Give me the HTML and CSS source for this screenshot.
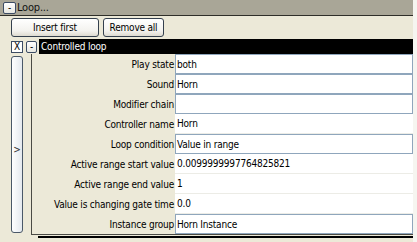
FILE: index.html
```html
<!DOCTYPE html>
<html>
<head>
<meta charset="utf-8">
<link rel="stylesheet" href="styles.css">
</head>
<body>
<div class="app">
  <div class="header">
    <span class="mini">-</span>
    <span class="header-title">Loop...</span>
  </div>
  <div class="toolbar">
    <button class="btn btn-insert">Insert first</button>
    <button class="btn btn-remove">Remove all</button>
  </div>
  <div class="item">
    <div class="item-head">
      <span class="chk">X</span>
      <span class="mini mini-item">-</span>
      <div class="item-title">Controlled loop</div>
    </div>
    <div class="item-body">
      <div class="side-btn">&gt;</div>
      <div class="props">
        <div class="row"><div class="label">Play state</div><div class="value box">both</div></div>
        <div class="row"><div class="label">Sound</div><div class="value box">Horn</div></div>
        <div class="row"><div class="label">Modifier chain</div><div class="value box"></div></div>
        <div class="row"><div class="label">Controller name</div><div class="value plain">Horn</div></div>
        <div class="row"><div class="label">Loop condition</div><div class="value box">Value in range</div></div>
        <div class="row"><div class="label">Active range start value</div><div class="value plain">0.0099999997764825821</div></div>
        <div class="row"><div class="label">Active range end value</div><div class="value plain">1</div></div>
        <div class="row"><div class="label">Value is changing gate time</div><div class="value plain">0.0</div></div>
        <div class="row"><div class="label">Instance group</div><div class="value box">Horn Instance</div></div>
      </div>
    </div>
    <div class="next-bar"></div>
  </div>
</div>
</body>
</html>
```

FILE: styles.css
```css
html, body {
  margin: 0;
  padding: 0;
}
body {
  background: #f6f5f0;
  font-family: "DejaVu Sans Condensed", "DejaVu Sans", sans-serif;
  font-stretch: condensed;
  font-size: 10px;
  letter-spacing: -0.2px;
  color: #000;
}
.app {
  width: 413px;
  height: 242px;
  background: #ece9d8;
  overflow: hidden;
}
.header {
  height: 16px;
  background: #a9a697;
  border-bottom: 1px solid #2e2e28;
  display: flex;
  align-items: center;
  padding-left: 3px;
  box-sizing: border-box;
}
.mini {
  width: 13px;
  height: 12px;
  box-sizing: border-box;
  border: 1px solid #3c4c64;
  border-radius: 2px;
  background: linear-gradient(#ffffff, #e6e6e0);
  display: flex;
  align-items: center;
  justify-content: center;
  font-size: 10px;
  line-height: 1;
  letter-spacing: 0;
}
.header-title {
  margin-left: 1px;
  font-size: 11px;
  color: #111;
}
.toolbar {
  display: flex;
  gap: 4px;
  padding: 2px 0 0 11px;
  height: 23px;
  box-sizing: border-box;
}
.btn {
  height: 19px;
  box-sizing: border-box;
  border: 1px solid #34404e;
  border-radius: 3px;
  background: linear-gradient(#ffffff, #f3f2ee 70%, #dedbd0);
  font-family: inherit;
  font-stretch: condensed;
  font-size: 10px;
  letter-spacing: -0.2px;
  padding: 0;
  color: #000;
}
.btn-insert { width: 88px; }
.btn-remove { width: 61px; }
.item-head {
  display: flex;
  align-items: center;
  height: 15px;
  padding-left: 11px;
}
.chk {
  width: 12px;
  height: 12px;
  box-sizing: border-box;
  border: 1px solid #3c4c64;
  background: #fff;
  display: flex;
  align-items: center;
  justify-content: center;
  font-size: 10px;
  letter-spacing: 0;
  line-height: 1;
}
.mini-item {
  margin-left: 3px;
  width: 11px;
}
.item-title {
  flex: 1;
  margin-left: 2px;
  height: 15px;
  background: #000;
  color: #fff;
  display: flex;
  align-items: center;
  padding-left: 2px;
}
.item-body {
  display: flex;
  padding-left: 11px;
}
.side-btn {
  width: 12px;
  height: 177px;
  margin-top: 2px;
  padding-top: 10px;
  box-sizing: border-box;
  border: 1px solid #4a5868;
  border-radius: 3px;
  background: linear-gradient(90deg, #ffffff, #e4e9ee);
  display: flex;
  align-items: center;
  justify-content: center;
  font-size: 10px;
  color: #333;
}
.props {
  flex: 1;
  margin-left: 8px;
  border-left: 1px solid #4a4a44;
  border-bottom: 1px solid #4a4a44;
  display: flex;
  flex-direction: column;
}
.row {
  display: flex;
  height: 20px;
}
.label {
  width: 143px;
  padding-right: 1px;
  box-sizing: border-box;
  display: flex;
  align-items: center;
  justify-content: flex-end;
  white-space: nowrap;
}
.value {
  flex: 1;
  background: #fff;
  box-sizing: border-box;
  display: flex;
  align-items: center;
  padding-left: 2px;
  white-space: nowrap;
}
.box {
  border: 1px solid #8fa6bc;
  padding-left: 1px;
}
.plain {
  border-bottom: 1px solid #ecece6;
}
.next-bar {
  margin-left: 38px;
  margin-top: 1px;
  height: 2px;
  background: #000;
}
```
